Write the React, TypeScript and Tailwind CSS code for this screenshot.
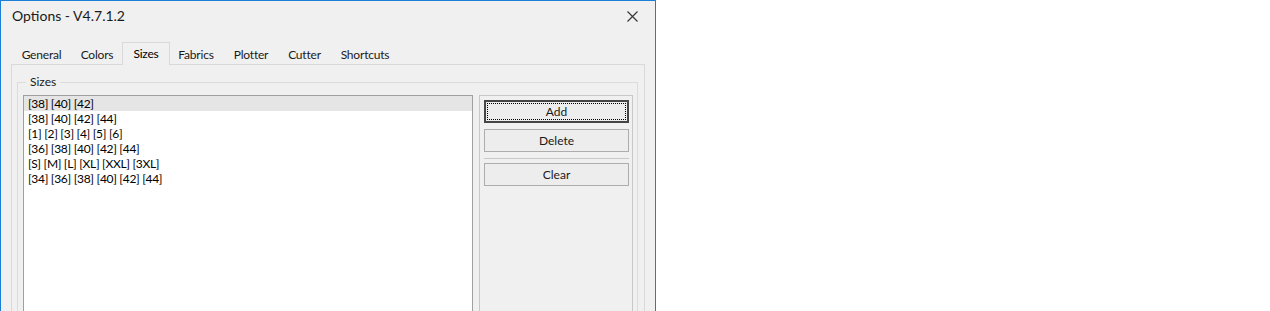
const tabs = [
  { label: "General", w: "w-[57px]" },
  { label: "Colors", w: "w-[54px]" },
  { label: "Sizes", w: "w-[42px]", active: true },
  { label: "Fabrics", w: "w-[56px]" },
  { label: "Plotter", w: "w-[54px]" },
  { label: "Cutter", w: "w-[53px]" },
  { label: "Shortcuts", w: "w-[68px]" },
];

const sizes = [
  "[38] [40] [42]",
  "[38] [40] [42] [44]",
  "[1] [2] [3] [4] [5] [6]",
  "[36] [38] [40] [42] [44]",
  "[S] [M] [L] [XL] [XXL] [3XL]",
  "[34] [36] [38] [40] [42] [44]",
];

const font = { fontFamily: '"Segoe UI", Lato, "Noto Sans", sans-serif' };

const App = () => {
  return (
    <div className="w-[1270px] h-[311px] bg-white overflow-hidden" style={font}>
      <div className="w-[656px] h-[311px] bg-[#f0f0f0] border border-b-0 border-[#1c7fd6] flex flex-col overflow-hidden text-black">
        {/* title bar */}
        <div className="h-[30px] shrink-0 flex items-center justify-between pl-[11px] pr-[17px]">
          <span className="text-[14px] leading-none text-[#1a1a1a]">Options - V4.7.1.2</span>
          <svg width="11" height="11" viewBox="0 0 11 11" className="text-[#333]">
            <path d="M0.5 0.5 L10.5 10.5 M10.5 0.5 L0.5 10.5" stroke="currentColor" strokeWidth="1.1" />
          </svg>
        </div>

        {/* tabs */}
        <div className="mt-[12px] h-[21px] shrink-0 flex items-end pl-[12px] relative z-10 tracking-[-0.2px]">
          {tabs.map((t) =>
            t.active ? (
              <div
                key={t.label}
                className={`${t.w} -mx-[2px] box-content px-[2px] h-[22px] -mb-[1px] bg-[#f0f0f0] border border-b-0 border-[#d9d9d9] flex items-center justify-center text-[12px]`}
              >
                {t.label}
              </div>
            ) : (
              <div key={t.label} className={`${t.w} h-[19px] flex items-center justify-center text-[12px] text-[#1a1a1a]`}>
                {t.label}
              </div>
            )
          )}
        </div>

        {/* tab page */}
        <div className="ml-[10px] w-[634px] h-[400px] shrink-0 border border-[#d9d9d9] pt-[17px] pl-[5px]">
          <div className="relative w-[621px] h-[300px] border border-[#dcdcdc] flex gap-[6px] pt-[12px] pl-[5px]">
            <span className="absolute left-[8px] -top-[9px] px-[4px] bg-[#f0f0f0] text-[12px] leading-[16px] text-[#1a1a1a]">
              Sizes
            </span>

            {/* list */}
            <div className="w-[450px] h-[260px] bg-white border border-[#a0a0a0] text-[12px] tracking-[-0.3px]">
              {sizes.map((s, i) => (
                <div
                  key={s}
                  className={`h-[15px] leading-[15px] pl-[4px] ${i === 0 ? "bg-[#e5e5e5]" : ""}`}
                >
                  {s}
                </div>
              ))}
            </div>

            {/* buttons */}
            <div className="w-[154px] h-[260px] border border-[#c8c8c8] pt-[4px] pl-[4px] flex flex-col text-[12px] text-[#1a1a1a]">
              <div className="relative w-[145px] h-[23px] bg-[#ededed] border-2 border-[#454545] flex items-center justify-center">
                <span className="absolute inset-[1px] border border-dotted border-black" />
                Add
              </div>
              <div className="mt-[6px] w-[145px] h-[23px] bg-[#ededed] border border-[#adadad] flex items-center justify-center">
                Delete
              </div>
              <div className="mt-[6px] w-[145px] h-[1px] bg-[#c8c8c8]" />
              <div className="mt-[4px] w-[145px] h-[23px] bg-[#ededed] border border-[#adadad] flex items-center justify-center">
                Clear
              </div>
            </div>
          </div>
        </div>
      </div>
    </div>
  );
};

export default App;
